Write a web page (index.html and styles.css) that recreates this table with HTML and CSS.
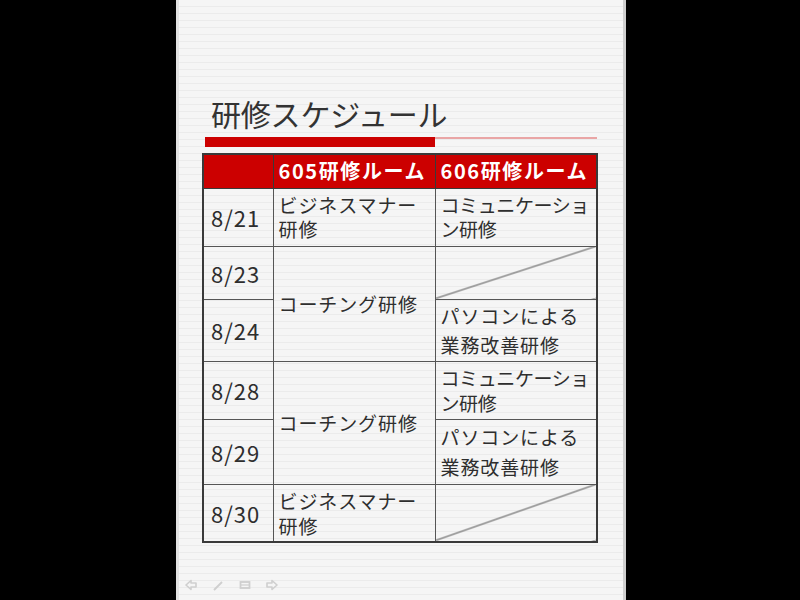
FILE: index.html
```html
<!DOCTYPE html>
<html lang="ja">
<head>
<meta charset="utf-8">
<title>研修スケジュール</title>
<link rel="stylesheet" href="styles.css">
</head>
<body>
<div class="slide">
  <h1 class="title">研修スケジュール</h1>
  <div class="rule"><span class="rule-thick"></span><span class="rule-thin"></span></div>
  <table class="schedule">
    <colgroup><col class="c-date"><col class="c-room"><col class="c-room"></colgroup>
    <tr class="head r-head">
      <th></th>
      <th>605研修ルーム</th>
      <th>606研修ルーム</th>
    </tr>
    <tr class="r1">
      <td class="date">8/21</td>
      <td class="lh24">ビジネスマナー<br>研修</td>
      <td class="lh24 tight">コミュニケーショ<br>ン研修</td>
    </tr>
    <tr class="r2">
      <td class="date">8/23</td>
      <td rowspan="2">コーチング研修</td>
      <td class="diag"></td>
    </tr>
    <tr class="r3">
      <td class="date">8/24</td>
      <td class="lh29">パソコンによる<br>業務改善研修</td>
    </tr>
    <tr class="r4">
      <td class="date">8/28</td>
      <td rowspan="2">コーチング研修</td>
      <td class="lh25 tight">コミュニケーショ<br>ン研修</td>
    </tr>
    <tr class="r5">
      <td class="date">8/29</td>
      <td class="lh30">パソコンによる<br>業務改善研修</td>
    </tr>
    <tr class="r6">
      <td class="date">8/30</td>
      <td class="lh25">ビジネスマナー<br>研修</td>
      <td class="diag"></td>
    </tr>
  </table>
  <div class="nav">
    <svg class="nav-icon" width="12" height="12" viewBox="0 0 12 12"><path d="M1 6 L6 1.5 V4 H11 V8 H6 V10.5 Z" fill="none" stroke="#cfcfcf" stroke-width="1.6" stroke-linejoin="round"/></svg>
    <svg class="nav-icon" width="12" height="12" viewBox="0 0 12 12"><path d="M2 11 L10 3" stroke="#cfcfcf" stroke-width="2"/></svg>
    <svg class="nav-icon" width="12" height="12" viewBox="0 0 12 12"><rect x="1.5" y="3" width="9" height="6" fill="none" stroke="#cfcfcf" stroke-width="1.8"/><path d="M1.5 6 H10.5" stroke="#cfcfcf" stroke-width="1.2"/></svg>
    <svg class="nav-icon" width="12" height="12" viewBox="0 0 12 12"><path d="M11 6 L6 1.5 V4 H1 V8 H6 V10.5 Z" fill="none" stroke="#cfcfcf" stroke-width="1.6" stroke-linejoin="round"/></svg>
  </div>
</div>
</body>
</html>
```

FILE: styles.css
```css
html, body {
  margin: 0;
  padding: 0;
  background: #000;
}
body {
  width: 800px;
  height: 600px;
  overflow: hidden;
}
.slide {
  box-sizing: border-box;
  width: 450px;
  height: 600px;
  margin-left: 176px;
  background: repeating-linear-gradient(to bottom, #f5f5f5 0, #f5f5f5 6px, #ebebeb 6px, #ebebeb 7px);
  border-left: 3px solid #e2e2e2;
  border-right: 3px solid #cfcfcf;
  display: flex;
  flex-direction: column;
  font-family: "Noto Sans CJK JP", "Noto Sans", sans-serif;
  color: #2e2e2e;
}
.title {
  margin: 95px 0 0 32px;
  font-size: 30px;
  font-weight: 400;
  line-height: 36px;
  color: #333;
  letter-spacing: -0.2px;
}
.rule {
  display: flex;
  align-items: flex-start;
  margin: 6px 0 0 26px;
  width: 392px;
}
.rule-thick {
  width: 230px;
  height: 10px;
  background: #cc0000;
}
.rule-thin {
  flex: 1;
  height: 2px;
  background: #e9a5a5;
}
.schedule {
  margin: 6px 0 0 23px;
  width: 396px;
  border-collapse: collapse;
  border: 2px solid #3a3a3a;
  table-layout: fixed;
}
.c-date { width: 70px; }
.c-room { width: 162px; }
.schedule th,
.schedule td {
  border: 1px solid #555;
  padding: 0 0 0 5px;
  text-align: left;
  vertical-align: middle;
  font-size: 19px;
  line-height: 24px;
  letter-spacing: 0.9px;
  white-space: nowrap;
  overflow: hidden;
}
.schedule td.tight {
  letter-spacing: -0.4px;
}
.schedule th {
  background: #cc0000;
  color: #fff;
  font-weight: 700;
  font-size: 20px;
  letter-spacing: 1.6px;
  border-color: #3a3a3a;
  padding-top: 0;
}
.schedule td.date {
  font-size: 22px;
  letter-spacing: 1px;
  padding-left: 7px;
}
.lh24 { line-height: 24px !important; }
.lh25 { line-height: 25px !important; }
.lh29 { line-height: 29px !important; }
.lh30 { line-height: 30px !important; }
.diag {
  background: linear-gradient(to bottom right, transparent calc(50% - 1px), #555 50%, transparent calc(50% + 1px));
}
.r-head { height: 34px; }
.r1 { height: 58px; }
.r2 { height: 53px; }
.r3 { height: 62px; }
.r4 { height: 58px; }
.r5 { height: 65px; }
.r6 { height: 58px; }
.nav {
  display: flex;
  gap: 15px;
  margin: 36px 0 0 6px;
}
.nav-icon {
  display: block;
}
```
